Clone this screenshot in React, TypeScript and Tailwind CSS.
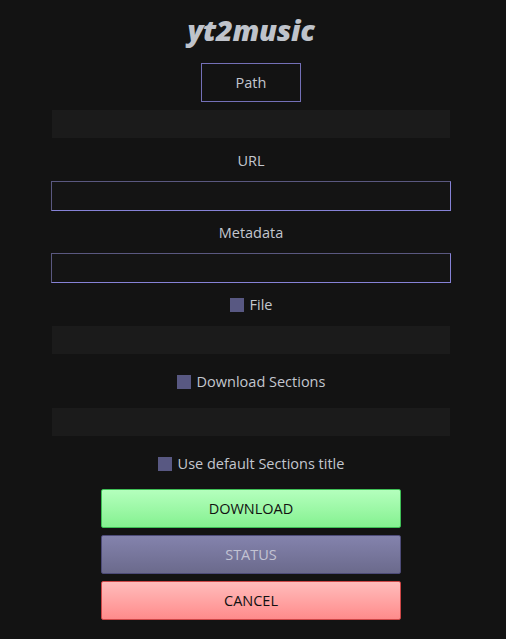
import React from "react";

const font = { fontFamily: '"Open Sans", "Noto Sans", sans-serif' };

function Check({ label }: { label: string }) {
  return (
    <div className="flex items-center justify-center gap-[6px] h-[20px]">
      <span className="block w-[14px] h-[14px] bg-[#585882]" />
      <span className="text-[14.5px] text-[#c3c7cf]">{label}</span>
    </div>
  );
}

function Bar() {
  return <div className="w-[398px] h-[28px] bg-[#1b1b1b]" />;
}

function Input() {
  return (
    <div className="w-[400px] h-[30px] bg-[#141414] border border-[#5a5880] border-b-[#8682d6] border-r-[#8682d6]" />
  );
}

export default function App() {
  return (
    <div className="w-[506px] h-[639px] bg-[#131313]" style={font}>
      <div className="w-[502px] flex flex-col items-center">
        <div className="mt-[12px] h-[36px] flex items-center text-[29px] font-extrabold italic text-[#bfc3cb] tracking-[-0.3px]">
          yt2music
        </div>
        <div className="mt-[15px] w-[100px] h-[39px] border border-[#7470b8] flex items-center justify-center text-[14.5px] text-[#c3c7cf]">
          Path
        </div>
        <div className="mt-[8px]"><Bar /></div>
        <div className="mt-[12px] h-[22px] flex items-center text-[14.5px] text-[#c3c7cf]">URL</div>
        <div className="mt-[9px]"><Input /></div>
        <div className="mt-[11px] h-[22px] flex items-center text-[14.5px] text-[#c3c7cf]">Metadata</div>
        <div className="mt-[9px]"><Input /></div>
        <div className="mt-[12px]"><Check label="File" /></div>
        <div className="mt-[11px]"><Bar /></div>
        <div className="mt-[18px]"><Check label="Download Sections" /></div>
        <div className="mt-[16px]"><Bar /></div>
        <div className="mt-[18px]"><Check label="Use default Sections title" /></div>
        <div className="mt-[15px] flex flex-col gap-[7px]">
          <button className="w-[300px] h-[39px] rounded-[2px] border border-[#3fbf56] bg-gradient-to-b from-[#b4ffbd] to-[#84f190] text-[14.5px] text-[#111]">
            DOWNLOAD
          </button>
          <button className="w-[300px] h-[39px] rounded-[2px] border border-[#4d4b78] bg-gradient-to-b from-[#8483ad] to-[#6b6a8c] text-[14.5px] text-[#c3c3d3]">
            STATUS
          </button>
          <button className="w-[300px] h-[39px] rounded-[2px] border border-[#cd4747] bg-gradient-to-b from-[#ffbcbc] to-[#fe8b8b] text-[14.5px] text-[#111]">
            CANCEL
          </button>
        </div>
      </div>
    </div>
  );
}
